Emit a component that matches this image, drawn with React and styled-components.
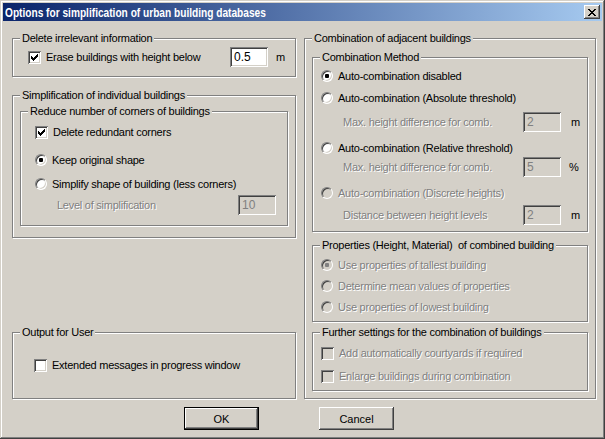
import styled, { createGlobalStyle } from "styled-components";

const GlobalStyle = createGlobalStyle`
  html, body {
    margin: 0;
    padding: 0;
    background: #d4d0c8;
  }
  body {
    font-family: "Liberation Sans", Arial, sans-serif;
    font-size: 11px;
    color: #000;
  }
`;

const sunken = `
  box-shadow: inset 1px 1px #808080, inset -1px -1px #fff,
    inset 2px 2px #404040, inset -2px -2px #d4d0c8;
`;

const Window = styled.div`
  width: 605px;
  height: 439px;
  box-sizing: border-box;
  padding: 3px;
  background: #d4d0c8;
  box-shadow: inset -1px -1px #404040, inset 1px 1px #d4d0c8,
    inset -2px -2px #808080, inset 2px 2px #fff;
  display: flex;
  flex-direction: column;
`;

const TitleBar = styled.div`
  height: 18px;
  display: flex;
  align-items: center;
  padding: 0 2px;
  background: linear-gradient(to right, #0a246a, #a6caf0);
`;

const TitleText = styled.span`
  color: #fff;
  font-weight: bold;
  font-size: 13px;
  white-space: nowrap;
  transform: scaleX(0.78);
  transform-origin: left center;
`;

const CloseButton = styled.span`
  margin-left: auto;
  width: 16px;
  height: 14px;
  box-sizing: border-box;
  background: #d4d0c8;
  box-shadow: inset -1px -1px #404040, inset 1px 1px #fff,
    inset -2px -2px #808080;
  display: flex;
  align-items: center;
  justify-content: center;
`;

const Content = styled.div`
  display: grid;
  grid-template-columns: 284px 292px;
  column-gap: 8px;
  padding: 17px 0 0 9px;
`;

const Column = styled.div`
  display: flex;
  flex-direction: column;
`;

const Group = styled.div`
  position: relative;
  box-sizing: border-box;
  width: ${(p) => p.$w}px;
  height: ${(p) => p.$h}px;
  margin-top: ${(p) => (p.$auto ? "auto" : `${p.$mt || 0}px`)};
  padding: ${(p) => p.$pt || 0}px ${(p) => p.$pr || 0}px 0 ${(p) => p.$pl || 0}px;
  border: 1px solid #808080;
  box-shadow: inset 1px 1px #fff, 1px 1px #fff;
`;

const Caption = styled.span`
  position: absolute;
  top: -7px;
  left: 7px;
  padding: 0 2px;
  line-height: 13px;
  background: #d4d0c8;
  white-space: pre;
  letter-spacing: -0.25px;
`;

const Row = styled.div`
  display: flex;
  align-items: center;
  height: ${(p) => p.$h || 16}px;
  margin-top: ${(p) => p.$mt || 0}px;
  padding-left: ${(p) => p.$indent || 0}px;
`;

const Box = styled.span`
  flex: none;
  width: 13px;
  height: 13px;
  box-sizing: border-box;
  background: ${(p) => (p.$disabled ? "#d4d0c8" : "#fff")};
  ${sunken}
  display: flex;
  align-items: center;
  justify-content: center;
`;

const RadioCircle = styled.span`
  flex: none;
  width: 12px;
  height: 12px;
  box-sizing: border-box;
  border-radius: 50%;
  border: 1px solid;
  border-color: #808080 #fff #fff #808080;
  background: ${(p) => (p.$disabled ? "#d4d0c8" : "#fff")};
  box-shadow: inset 1px 1px #404040, inset -1px -1px #d4d0c8;
  display: flex;
  align-items: center;
  justify-content: center;
`;

const Dot = styled.span`
  width: 4px;
  height: 4px;
  border-radius: 1px;
  background: ${(p) => (p.$disabled ? "#808080" : "#000")};
`;

const Label = styled.span`
  margin-left: ${(p) => (p.$plain ? 0 : 5)}px;
  white-space: nowrap;
  letter-spacing: -0.25px;
  color: ${(p) => (p.$disabled ? "#808080" : "#000")};
  text-shadow: ${(p) => (p.$disabled ? "1px 1px #fff" : "none")};
`;

const Field = styled.span`
  margin-left: auto;
  flex: none;
  width: 38px;
  height: 20px;
  box-sizing: border-box;
  padding-left: 4px;
  display: flex;
  align-items: center;
  font-size: 12px;
  background: ${(p) => (p.$disabled ? "#d4d0c8" : "#fff")};
  color: ${(p) => (p.$disabled ? "#808080" : "#000")};
  ${sunken}
`;

const Unit = styled.span`
  flex: none;
  width: ${(p) => p.$w}px;
  box-sizing: border-box;
  padding-left: ${(p) => p.$pad}px;
`;

const Footer = styled.div`
  display: flex;
  gap: 60px;
  padding: 8px 0 0 181px;
`;

const Button = styled.button`
  width: 75px;
  height: 23px;
  box-sizing: border-box;
  padding: 0;
  font-family: inherit;
  font-size: 11px;
  color: #000;
  background: #d4d0c8;
  border: ${(p) => (p.$default ? "1px solid #000" : "none")};
  box-shadow: inset -1px -1px #404040, inset 1px 1px #fff,
    inset -2px -2px #808080, inset 2px 2px #d4d0c8;
`;

function CheckMark() {
  const cols = [2, 3, 4, 3, 2, 1, 0];
  return (
    <svg width="7" height="7" viewBox="0 0 7 7" shapeRendering="crispEdges">
      {cols.map((y, x) => (
        <rect key={x} x={x} y={y} width="1" height="3" fill="#000" />
      ))}
    </svg>
  );
}

function Check({ checked, disabled, children }) {
  return (
    <>
      <Box $disabled={disabled}>{checked && <CheckMark />}</Box>
      <Label $disabled={disabled}>{children}</Label>
    </>
  );
}

function Radio({ checked, disabled, children }) {
  return (
    <>
      <RadioCircle $disabled={disabled}>
        {checked && <Dot $disabled={disabled} />}
      </RadioCircle>
      <Label $disabled={disabled}>{children}</Label>
    </>
  );
}

export default function App() {
  return (
    <>
      <GlobalStyle />
      <Window>
        <TitleBar>
          <TitleText>Options for simplification of urban building databases</TitleText>
          <CloseButton>
            <svg width="8" height="7" viewBox="0 0 8 7" shapeRendering="crispEdges">
              <path d="M0 0h2l2 2.5L6 0h2L5 3.5 8 7H6L4 4.5 2 7H0l3-3.5z" fill="#000" />
            </svg>
          </CloseButton>
        </TitleBar>

        <Content>
          <Column>
            <Group $w={284} $h={39} $pt={8} $pl={15}>
              <Caption>Delete irrelevant information</Caption>
              <Row $h={20}>
                <Check checked>Erase buildings with height below</Check>
                <Field>0.5</Field>
                <Unit $w={27} $pad={8}>m</Unit>
              </Row>
            </Group>

            <Group $w={284} $h={143} $mt={18} $pt={15} $pl={7}>
              <Caption>Simplification of individual buildings</Caption>
              <Group $w={268} $h={115} $pt={12} $pl={14} $pr={11}>
                <Caption>Reduce number of corners of buildings</Caption>
                <Row>
                  <Check checked>Delete redundant corners</Check>
                </Row>
                <Row $mt={12}>
                  <Radio checked>Keep original shape</Radio>
                </Row>
                <Row $mt={8}>
                  <Radio>Simplify shape of building (less corners)</Radio>
                </Row>
                <Row $h={20} $mt={3} $indent={22}>
                  <Label $plain $disabled>Level of simplification</Label>
                  <Field $disabled>10</Field>
                </Row>
              </Group>
            </Group>

            <Group $w={284} $h={67} $auto $pt={24} $pl={21}>
              <Caption>Output for User</Caption>
              <Row>
                <Check>Extended messages in progress window</Check>
              </Row>
            </Group>
          </Column>

          <Group $w={292} $h={361} $pt={18} $pl={7}>
            <Caption>Combination of adjacent buildings</Caption>

            <Group $w={276} $h={175} $pt={10} $pl={8}>
              <Caption>Combination Method</Caption>
              <Row>
                <Radio checked>Auto-combination disabled</Radio>
              </Row>
              <Row $mt={6}>
                <Radio>Auto-combination (Absolute threshold)</Radio>
              </Row>
              <Row $h={20} $mt={6} $indent={22}>
                <Label $plain $disabled>Max. height difference for comb.</Label>
                <Field $disabled>2</Field>
                <Unit $w={26} $pad={10}>m</Unit>
              </Row>
              <Row $mt={8}>
                <Radio>Auto-combination (Relative threshold)</Radio>
              </Row>
              <Row $h={20} $mt={1} $indent={22}>
                <Label $plain $disabled>Max. height difference for comb.</Label>
                <Field $disabled>5</Field>
                <Unit $w={26} $pad={8}>%</Unit>
              </Row>
              <Row $mt={8}>
                <Radio disabled>Auto-combination (Discrete heights)</Radio>
              </Row>
              <Row $h={20} $mt={4} $indent={22}>
                <Label $plain $disabled>Distance between height levels</Label>
                <Field $disabled>2</Field>
                <Unit $w={26} $pad={10}>m</Unit>
              </Row>
            </Group>

            <Group $w={276} $h={77} $mt={13} $pt={11} $pl={8}>
              <Caption>{"Properties (Height, Material)  of combined building"}</Caption>
              <Row>
                <Radio checked disabled>Use properties of tallest building</Radio>
              </Row>
              <Row $mt={5}>
                <Radio disabled>Determine mean values of properties</Radio>
              </Row>
              <Row $mt={5}>
                <Radio disabled>Use properties of lowest building</Radio>
              </Row>
            </Group>

            <Group $w={276} $h={59} $mt={10} $pt={12} $pl={8}>
              <Caption>Further settings for the combination of buildings</Caption>
              <Row>
                <Check disabled>Add automatically courtyards if required</Check>
              </Row>
              <Row $mt={7}>
                <Check disabled>Enlarge buildings during combination</Check>
              </Row>
            </Group>
          </Group>
        </Content>

        <Footer>
          <Button $default>OK</Button>
          <Button>Cancel</Button>
        </Footer>
      </Window>
    </>
  );
}
